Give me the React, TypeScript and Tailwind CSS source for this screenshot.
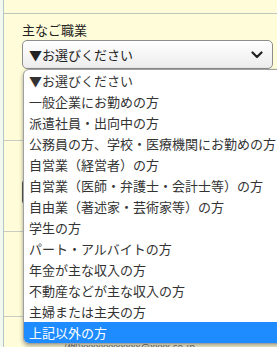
import React from 'react';

const options = [
  '▼お選びください',
  '一般企業にお勤めの方',
  '派遣社員・出向中の方',
  '公務員の方、学校・医療機関にお勤めの方',
  '自営業（経営者）の方',
  '自営業（医師・弁護士・会計士等）の方',
  '自由業（著述家・芸術家等）の方',
  '学生の方',
  'パート・アルバイトの方',
  '年金が主な収入の方',
  '不動産などが主な収入の方',
  '主婦または主夫の方',
  '上記以外の方',
];

function Chevron() {
  return (
    <svg width="12" height="8" viewBox="0 0 12 8" className="shrink-0">
      <path d="M1.5 1.5 L6 6 L10.5 1.5" fill="none" stroke="#222" strokeWidth="2.2" strokeLinecap="round" strokeLinejoin="round" />
    </svg>
  );
}

export default function App() {
  return (
    <div
      className="relative w-[277px] h-[347px] overflow-hidden bg-[#fffcd9] text-[#222]"
      style={{ fontFamily: '"Noto Sans CJK JP", "Noto Sans", sans-serif' }}
    >
      <div className="flex h-full">
        <div className="w-[3px] shrink-0 bg-[#f3f8ee]" />
        <div className="flex-1 border-l border-[#b3c6c9] flex flex-col">
          <div className="h-[14px] shrink-0 border-b border-[#bfc6bd]" />
          <div className="h-[127px] shrink-0 border-b border-[#c9ccc0] pl-[18px] pt-[8px]">
            <div className="text-[13px] leading-[16px]">主なご職業</div>
            <div className="mt-[2px] mr-[4px] h-[29px] rounded-[5px] border border-[#8d8d8d] bg-gradient-to-b from-white to-[#ececec] flex items-center justify-between pl-[6px] pr-[9px]">
              <span className="text-[13px] leading-none">▼お選びください</span>
              <Chevron />
            </div>
          </div>
          <div className="h-[91px] shrink-0 border-b border-[#c9ccc0] pl-[18px] pt-[38px]">
            <div className="h-[26px] rounded-[4px] border border-[#555]" />
          </div>
          <div className="h-[85px] shrink-0 border-b border-[#c9ccc0]" />
          <div className="shrink-0 pl-[60px] pt-[24px] text-[10px] leading-[12px] text-[#777]">(例)xxxxxxxxxxxx@xxxx.co.jp</div>
        </div>
      </div>

      <div className="absolute left-[23px] top-[69px] w-[262px] rounded-[6px] border border-[#a0a0a0] bg-white text-[#333] shadow-[0_2px_4px_rgba(0,0,0,0.35)] overflow-hidden">
        {options.map((o, i) => (
          <div
            key={o}
            className={
              'h-[21px] pl-[5px] flex items-center text-[13px] leading-none whitespace-nowrap ' +
              (i === options.length - 1 ? 'bg-[#1e8cff] text-white' : '')
            }
          >
            {o}
          </div>
        ))}
      </div>
    </div>
  );
}
